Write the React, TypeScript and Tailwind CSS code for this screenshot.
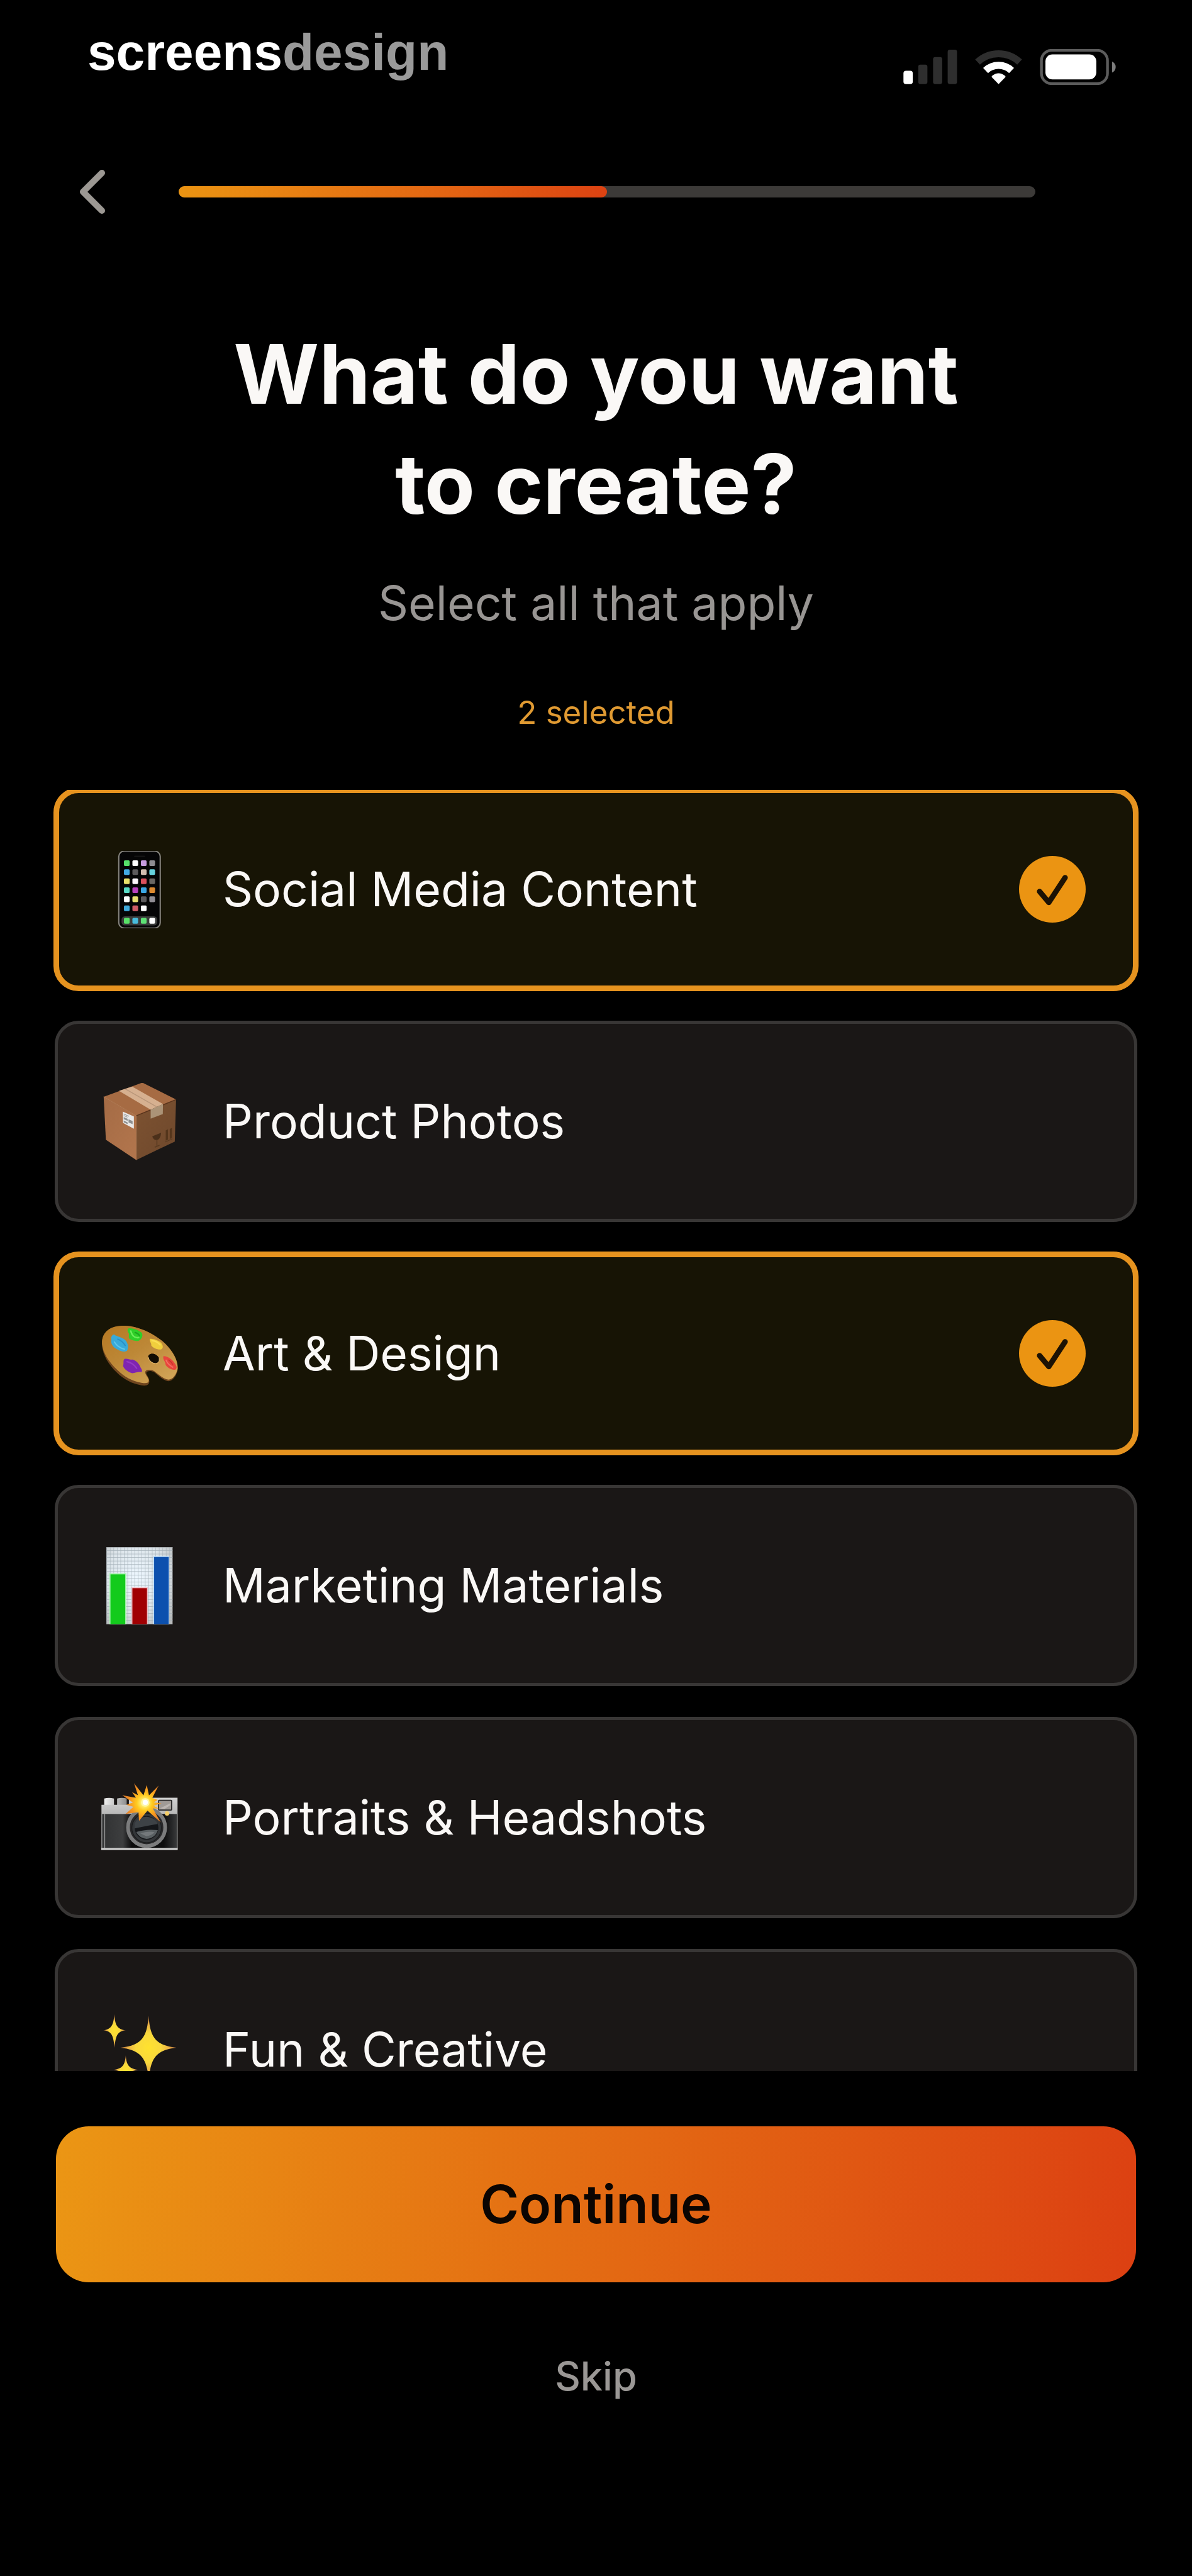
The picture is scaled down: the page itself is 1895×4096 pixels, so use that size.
import { useState } from "react";

const APP_COLORS = [
  ["#56e06a", "#ffffff", "#c79be0", "#8e8c92"],
  ["#42a9e2", "#5c5a5c", "#d3bdb0", "#66d3df"],
  ["#e8e06a", "#fbf6fb", "#d9505c", "#6a6763"],
  ["#58d8c4", "#b840bd", "#3ba6e2", "#dd8a30"],
  ["#ffffff", "#e8df70", "#5c5a5c", "#918e95"],
  ["#3fa9dc", "#cf5c66", "#ffffff"],
];
const DOCK_COLORS = ["#58e268", "#48bcdc", "#5ee075", "#ffffff"];

function PhoneIcon() {
  return (
    <svg viewBox="312 426 420 420" className="size-[123px] shrink-0" aria-hidden="true">
      <rect x="407" y="427" width="225" height="418" rx="30" fill="#050506" stroke="#87857f" strokeWidth="7" />
      <rect x="490" y="452" width="60" height="8" rx="4" fill="#141414" />
      {APP_COLORS.map((row, r) =>
        row.map((color, c) => (
          <rect key={`${r}-${c}`} x={435 + c * 46} y={477 + r * 49} width="31" height="31" rx="6" fill={color} />
        ))
      )}
      <rect x="422" y="781" width="194" height="50" rx="18" fill="#3a3b3a" />
      {DOCK_COLORS.map((color, c) => (
        <rect key={c} x={435 + c * 46} y="790" width="31" height="31" rx="6" fill={color} />
      ))}
    </svg>
  );
}

function PackageIcon() {
  return (
    <svg viewBox="132 188 420 420" className="size-[123px] shrink-0" aria-hidden="true">
      <defs>
        <linearGradient id="boxLeft" x1="0" y1="0" x2="1" y2="1">
          <stop offset="0" stopColor="#a46b45" />
          <stop offset="1" stopColor="#b3764d" />
        </linearGradient>
        <linearGradient id="boxRight" x1="0" y1="0" x2="1" y2="1">
          <stop offset="0" stopColor="#7d5231" />
          <stop offset="1" stopColor="#6e482c" />
        </linearGradient>
      </defs>
      <path d="M145 263 L355 186 L538 278 L322 366 Z" fill="#a66b43" />
      <path d="M145 263 L322 366 L322 606 L157 496 Z" fill="url(#boxLeft)" />
      <path d="M322 366 L538 278 L531 506 L322 606 Z" fill="url(#boxRight)" />
      <path d="M322 366 L538 278" stroke="#5a341c" strokeWidth="5" />
      <path d="M145 263 L322 366 L322 606" fill="none" stroke="#b98259" strokeWidth="3" />
      <path d="M228 231 L300 208 L467 302 L400 333 Z" fill="#d6b090" />
      <path d="M262 220 L434 318" stroke="#b9967a" strokeWidth="5" />
      <path d="M400 333 L467 302 L466 357 L400 382 Z" fill="#ab9377" />
      <path d="M249 343 L309 370 L309 436 L250 405 Z" fill="#e9e9e9" />
      <path d="M254 356 L282 369 M254 365 L274 374" stroke="#9a9a9a" strokeWidth="4" />
      <path d="M254 373 L275 383 L275 394 L254 384 Z M280 385 L302 395 L302 412 L280 402 Z M254 392 L275 402 L275 412 L254 401 Z" fill="#8e9090" />
      <path d="M409 477 L457 458 Q454 492 434 498 Q414 499 409 477 Z" fill="#4b301a" />
      <path d="M434 496 L434 530 M422 537 L448 526" stroke="#5a3b22" strokeWidth="5" />
      <path d="M482 445 L494 440 L494 495 L482 501 Z M504 437 L516 432 L516 487 L504 492 Z" fill="#55361c" />
      <path d="M478 509 L518 491" stroke="#5a3b22" strokeWidth="4" />
    </svg>
  );
}

function PaletteIcon() {
  return (
    <svg viewBox="132 189 420 420" className="size-[123px] shrink-0" aria-hidden="true">
      <defs>
        <linearGradient id="wood" x1="0" y1="0" x2="0.8" y2="1">
          <stop offset="0" stopColor="#b67822" />
          <stop offset="0.5" stopColor="#bd8837" />
          <stop offset="1" stopColor="#d1a457" />
        </linearGradient>
      </defs>
      <path
        d="M136 350 C134 280 180 244 265 247 C340 252 420 290 480 345 C525 390 552 440 547 487 C540 520 520 548 495 548 C470 545 445 520 420 500 C400 488 380 492 376 503 C380 520 393 530 393 552 C390 570 376 575 350 571 C300 562 255 540 215 500 C175 460 140 410 136 350 Z"
        fill="#70461f"
      />
      <path
        fillRule="evenodd"
        d="M136 345 C134 280 180 244 265 247 C340 252 420 290 480 345 C525 390 550 440 546 482 C540 512 520 540 497 540 C470 537 445 513 420 494 C400 482 372 483 370 500 C373 520 390 528 390 546 C388 560 374 561 350 557 C300 548 258 525 218 486 C175 445 140 395 136 345 Z M387 418 C390 438 408 452 427 452 C444 450 450 438 446 424 C438 406 420 397 404 399 C392 401 386 408 387 418 Z"
        fill="url(#wood)"
      />
      <path
        d="M387 418 C390 438 408 452 427 452 C444 450 450 438 446 424 C438 406 420 397 404 399 C392 401 386 408 387 418 Z"
        fill="#120c03"
      />
      <path d="M387 418 C390 438 408 452 427 452 C444 450 450 438 446 424" fill="none" stroke="#e0b66b" strokeWidth="4" />
      <path d="M202 294 C212 306 236 306 256 320 C275 335 284 362 272 383 C256 394 229 383 208 369 C192 358 183 340 187 324 C183 308 190 297 202 294 Z" fill="#39aad9" />
      <path d="M203 335 C216 356 238 370 258 374" fill="none" stroke="#62c6e8" strokeWidth="7" strokeLinecap="round" />
      <path d="M222 320 Q248 330 262 355" fill="none" stroke="#2a90c6" strokeWidth="7" strokeLinecap="round" />
      <path d="M281 261 C302 259 335 270 350 284 C362 298 352 321 336 328 C318 333 301 326 286 319 C276 306 287 296 280 286 C274 276 272 267 281 261 Z" fill="#2fcf29" />
      <path d="M292 276 C300 304 312 315 335 311" fill="none" stroke="#6aec58" strokeWidth="9" strokeLinecap="round" />
      <path d="M316 284 Q334 290 339 301" fill="none" stroke="#1ba81d" strokeWidth="7" strokeLinecap="round" />
      <path d="M396 318 C415 318 440 325 457 340 C469 355 469 372 456 376 C436 378 414 369 403 354 C407 342 390 329 396 318 Z" fill="#f0cf3d" />
      <path d="M408 328 Q434 331 451 351" fill="none" stroke="#fbdf56" strokeWidth="8" strokeLinecap="round" />
      <path d="M257 428 C272 422 286 433 300 431 C319 434 338 453 346 475 C352 484 357 494 349 499 C335 496 318 502 300 505 C281 501 257 485 250 466 C256 450 249 438 257 428 Z" fill="#7f24b0" />
      <path d="M272 442 Q306 450 324 478" fill="none" stroke="#9539c4" strokeWidth="8" strokeLinecap="round" />
      <path d="M470 412 C492 413 518 430 528 448 C540 463 546 476 536 484 C519 491 493 478 481 459 C483 443 462 428 470 412 Z" fill="#e8453c" />
      <path d="M484 434 Q492 457 520 472" fill="none" stroke="#f46e64" strokeWidth="7" strokeLinecap="round" />
      <path d="M498 433 Q513 444 520 457" fill="none" stroke="#c7302b" strokeWidth="5" strokeLinecap="round" />
    </svg>
  );
}

function ChartIcon() {
  return (
    <svg viewBox="132 190 420 420" className="size-[123px] shrink-0" aria-hidden="true">
      <defs>
        <radialGradient id="paper" cx="0.45" cy="0.4" r="0.75">
          <stop offset="0" stopColor="#edf7ff" />
          <stop offset="0.6" stopColor="#dce4e9" />
          <stop offset="1" stopColor="#b9bbbb" />
        </radialGradient>
        <pattern id="paperGrid" x="160" y="188" width="19" height="19" patternUnits="userSpaceOnUse">
          <path d="M0 0 H19 M0 0 V19" stroke="#a3b0b8" strokeWidth="4" />
        </pattern>
      </defs>
      <rect x="160" y="188" width="359" height="420" fill="url(#paper)" />
      <rect x="160" y="188" width="359" height="420" fill="url(#paperGrid)" />
      <path d="M160 190 H519" stroke="#8f9294" strokeWidth="4" />
      <rect x="176" y="332" width="92" height="276" fill="#a6f3ae" />
      <rect x="182" y="338" width="80" height="270" fill="#13cb1c" />
      <rect x="296" y="408" width="88" height="200" fill="#f3b9c0" />
      <rect x="301" y="413" width="79" height="195" fill="#a00003" />
      <rect x="414" y="239" width="87" height="369" fill="#b9dcfa" />
      <rect x="419" y="244" width="79" height="364" fill="#0c50ae" />
    </svg>
  );
}

function CameraIcon() {
  return (
    <svg viewBox="132 193 420 420" className="size-[123px] shrink-0" aria-hidden="true">
      <defs>
        <linearGradient id="knob" x1="0" x2="1">
          <stop offset="0" stopColor="#efefef" />
          <stop offset="0.5" stopColor="#c4c4c4" />
          <stop offset="1" stopColor="#8d8d8d" />
        </linearGradient>
        <linearGradient id="plate" x1="0" x2="0" y1="0" y2="1">
          <stop offset="0" stopColor="#d2d2d2" />
          <stop offset="1" stopColor="#b8b8b8" />
        </linearGradient>
        <linearGradient id="leather" x1="0" x2="1">
          <stop offset="0" stopColor="#303132" />
          <stop offset="0.28" stopColor="#3d3e3f" />
          <stop offset="0.4" stopColor="#0a0a0b" />
          <stop offset="0.82" stopColor="#0d0d0e" />
          <stop offset="1" stopColor="#3a3b3c" />
        </linearGradient>
        <radialGradient id="burst" cx="0.57" cy="0.5" r="0.5">
          <stop offset="0" stopColor="#ffffff" />
          <stop offset="0.16" stopColor="#fff176" />
          <stop offset="0.4" stopColor="#ffcb20" />
          <stop offset="0.75" stopColor="#f7971f" />
          <stop offset="1" stopColor="#e5822a" />
        </radialGradient>
      </defs>
      <path d="M148 298 Q174 291 201 298 V334 H148 Z M218 298 Q244 291 270 298 V334 H218 Z" fill="url(#knob)" />
      <path d="M133 332 H282 V294 H546 V384 H133 Z" fill="url(#plate)" />
      <rect x="133" y="382" width="413" height="188" fill="url(#leather)" />
      <path d="M135 382 V570 M151 382 V570 M544 382 V570" stroke="#a6a6a6" strokeWidth="4" />
      <rect x="132" y="566" width="415" height="12" fill="#c9c9c9" />
      <circle cx="378" cy="455" r="101" fill="#29292b" stroke="#7b7c7d" strokeWidth="20" />
      <circle cx="378" cy="458" r="80" fill="#333639" stroke="#191b1d" strokeWidth="4" />
      <circle cx="378" cy="458" r="64" fill="#15171a" />
      <path d="M313 434 Q328 398 378 397 Q429 403 438 436 Q378 446 313 460 Z" fill="#3d4246" />
      <path d="M322 480 Q378 462 439 470 Q424 515 378 517 Q338 513 322 480 Z" fill="#5a6063" />
      <path d="M343 487 Q388 473 421 481 Q404 502 375 502 Z" fill="#74797c" />
      <rect x="443" y="308" width="71" height="53" rx="3" fill="#9f9a96" stroke="#2a2a2a" strokeWidth="6" />
      <path d="M450 352 L507 324 V334 L475 355 Z" fill="#bcb6b2" />
      <circle cx="489" cy="379" r="12" fill="#f4cd68" />
      <path
        d="M310 215 L361 281 L379 225 L391 281 L443 228 L409 295 L438 306 L417 319 L458 324 L416 337 L443 353 L412 352 L454 427 L383 364 L337 419 L334 372 L264 382 L307 343 L268 332 L304 320 L246 280 L321 295 L299 263 L331 280 Z"
        fill="url(#burst)"
      />
      <circle cx="371" cy="319" r="23" fill="#fff7a8" />
      <circle cx="371" cy="319" r="14" fill="#ffffff" />
    </svg>
  );
}

function SparklesIcon() {
  return (
    <svg viewBox="312 435 420 420" className="size-[123px] shrink-0" aria-hidden="true">
      <defs>
        <radialGradient id="spark">
          <stop offset="0" stopColor="#ffe22e" />
          <stop offset="0.45" stopColor="#f8d83d" />
          <stop offset="0.75" stopColor="#e9ad45" />
          <stop offset="1" stopColor="#a8683c" />
        </radialGradient>
      </defs>
      <path d="M383 450 C387 510 397 532 445 538 C399 543 390 568 384 634 C378 568 370 543 323 538 C368 532 378 510 383 450 Z" fill="url(#spark)" />
      <path d="M569 459 C577 570 600 620 720 633 C600 646 580 700 570 808 C560 700 535 646 416 633 C538 620 560 570 569 459 Z" fill="url(#spark)" />
      <path d="M445 675 C449 725 460 747 512 753 C461 759 451 780 445 838 C439 780 430 759 379 753 C430 747 440 725 445 675 Z" fill="url(#spark)" />
    </svg>
  );
}

function StatusIcons() {
  return (
    <div className="flex gap-7 self-end">
      <svg viewBox="228 148 296 196" className="h-[57px] w-[86px]" role="img" aria-label="Signal">
        <rect x="229" y="267" width="51" height="73" rx="14" fill="#fff" />
        <rect x="310" y="233" width="50" height="107" rx="12" fill="#2e2e2e" />
        <rect x="391" y="192" width="50" height="148" rx="12" fill="#2e2e2e" />
        <rect x="471" y="151" width="51" height="189" rx="12" fill="#2e2e2e" />
      </svg>
      <svg viewBox="618 148 256 196" className="h-[57px] w-[75px]" role="img" aria-label="Wi-Fi">
        <path d="M631 219 A168 168 0 0 1 861 219" fill="none" stroke="#2e2e2e" strokeWidth="38" />
        <path d="M675 265 A104 104 0 0 1 817 265" fill="none" stroke="#fff" strokeWidth="39" />
        <path d="M746 340 L709 302 Q706 298 711 294 Q746 266 781 294 Q786 298 783 302 Z" fill="#fff" />
      </svg>
      <svg viewBox="970 148 416 196" className="h-[57px] w-[121px]" role="img" aria-label="Battery">
        <rect x="979" y="155" width="361" height="182" rx="56" fill="none" stroke="#5c5c5c" strokeWidth="15" />
        <rect x="1001" y="177" width="278" height="137" rx="38" fill="#fff" />
        <path d="M1365 216 Q1385 226 1385 246 Q1385 267 1365 277 Z" fill="#7c7c7c" />
      </svg>
    </div>
  );
}

const OPTIONS = [
  { id: "social", label: "Social Media Content", icon: <PhoneIcon /> },
  { id: "product", label: "Product Photos", icon: <PackageIcon /> },
  { id: "art", label: "Art & Design", icon: <PaletteIcon /> },
  { id: "marketing", label: "Marketing Materials", icon: <ChartIcon /> },
  { id: "portraits", label: "Portraits & Headshots", icon: <CameraIcon /> },
  { id: "fun", label: "Fun & Creative", icon: <SparklesIcon /> },
];

export default function App() {
  const [selected, setSelected] = useState<string[]>(["social", "art"]);

  const toggle = (id: string) => {
    setSelected((prev) =>
      prev.includes(id) ? prev.filter((item) => item !== id) : [...prev, id]
    );
  };

  return (
    <div className="flex h-screen flex-col bg-black font-['Inter',sans-serif] text-[#faf8f6]">
      {/* Status bar */}
      <div className="flex h-[135px] shrink-0 justify-between pt-[37px] pr-[121px] pl-[139px]">
        <div className="font-['Liberation_Sans',sans-serif] text-[82px] leading-[92px] font-bold text-white">
          screens<span className="text-[#9a9a9a]">design</span>
        </div>
        <StatusIcons />
      </div>

      {/* Back + progress */}
      <div className="mt-[134px] flex shrink-0 items-center gap-[117px] pr-[249px] pl-[126px]">
        <button type="button" aria-label="Back">
          <svg viewBox="0 0 41 72" className="h-[72px] w-[41px]" fill="none" stroke="#9c9893" strokeWidth="10" strokeLinecap="round" strokeLinejoin="round">
            <path d="M36 6 L6 36 L36 66" />
          </svg>
        </button>
        <div
          role="progressbar"
          aria-label="Progress"
          aria-valuenow={50}
          aria-valuemin={0}
          aria-valuemax={100}
          className="h-[18px] flex-1 overflow-hidden rounded-full bg-[#3c3a38]"
        >
          <div className="h-full w-1/2 rounded-r-full bg-linear-to-r from-[#eb9412] to-[#dc4212]" />
        </div>
      </div>

      {/* Title */}
      <div className="mt-[166px] shrink-0 text-center">
        <h1 className="text-[131px] leading-[175px] font-bold">
          What do you want
          <br />
          to create?
        </h1>
        <p className="mt-[50px] text-[75px] leading-[104px] text-[#989593]">Select all that apply</p>
        <p className="mt-[87px] text-[51px] leading-[70px] text-[#e09a32]">{selected.length} selected</p>
      </div>

      {/* Options */}
      <div className="mt-[88px] min-h-0 flex-1 overflow-y-auto px-[87px] [scrollbar-width:none]">
        <div className="-mt-[2px] flex flex-col gap-[49px]">
          {OPTIONS.map((option) => {
            const checked = selected.includes(option.id);
            return (
              <label
                key={option.id}
                className={`flex h-[320px] shrink-0 items-center gap-[70px] rounded-[38px] border-[5px] pr-[77px] pl-[69px] ${
                  checked
                    ? "border-[#e6931f] bg-[#171405] outline-[9px] -outline-offset-7 outline-[#e6931f]"
                    : "border-[#383635] bg-[#1a1716]"
                }`}
              >
                {option.icon}
                <span className="flex-1 text-[75px] leading-[104px]">{option.label}</span>
                <span className="grid size-[106px] shrink-0">
                  <input
                    type="checkbox"
                    checked={checked}
                    onChange={() => toggle(option.id)}
                    className="col-start-1 row-start-1 size-full appearance-none rounded-full checked:bg-[#eb9412]"
                  />
                  {checked && (
                    <svg viewBox="0 0 360 360" className="pointer-events-none col-start-1 row-start-1 size-full" fill="none" stroke="#1c1204" strokeWidth="29" strokeLinecap="round" strokeLinejoin="round" aria-hidden="true">
                      <path d="M111 192 L161 251 L249 117" />
                    </svg>
                  )}
                </span>
              </label>
            );
          })}
        </div>
      </div>

      {/* Actions */}
      <div className="flex shrink-0 flex-col items-center px-[89px] pt-[88px] pb-[274px]">
        <button
          type="button"
          className="h-[248px] w-full rounded-[52px] bg-linear-[98deg,#eb9614,#dc4012] text-[84px] font-semibold text-[#0b0502]"
        >
          Continue
        </button>
        <button type="button" className="mt-[105px] text-[63px] leading-[88px] font-medium text-[#9a9795]">
          Skip
        </button>
      </div>
    </div>
  );
}
